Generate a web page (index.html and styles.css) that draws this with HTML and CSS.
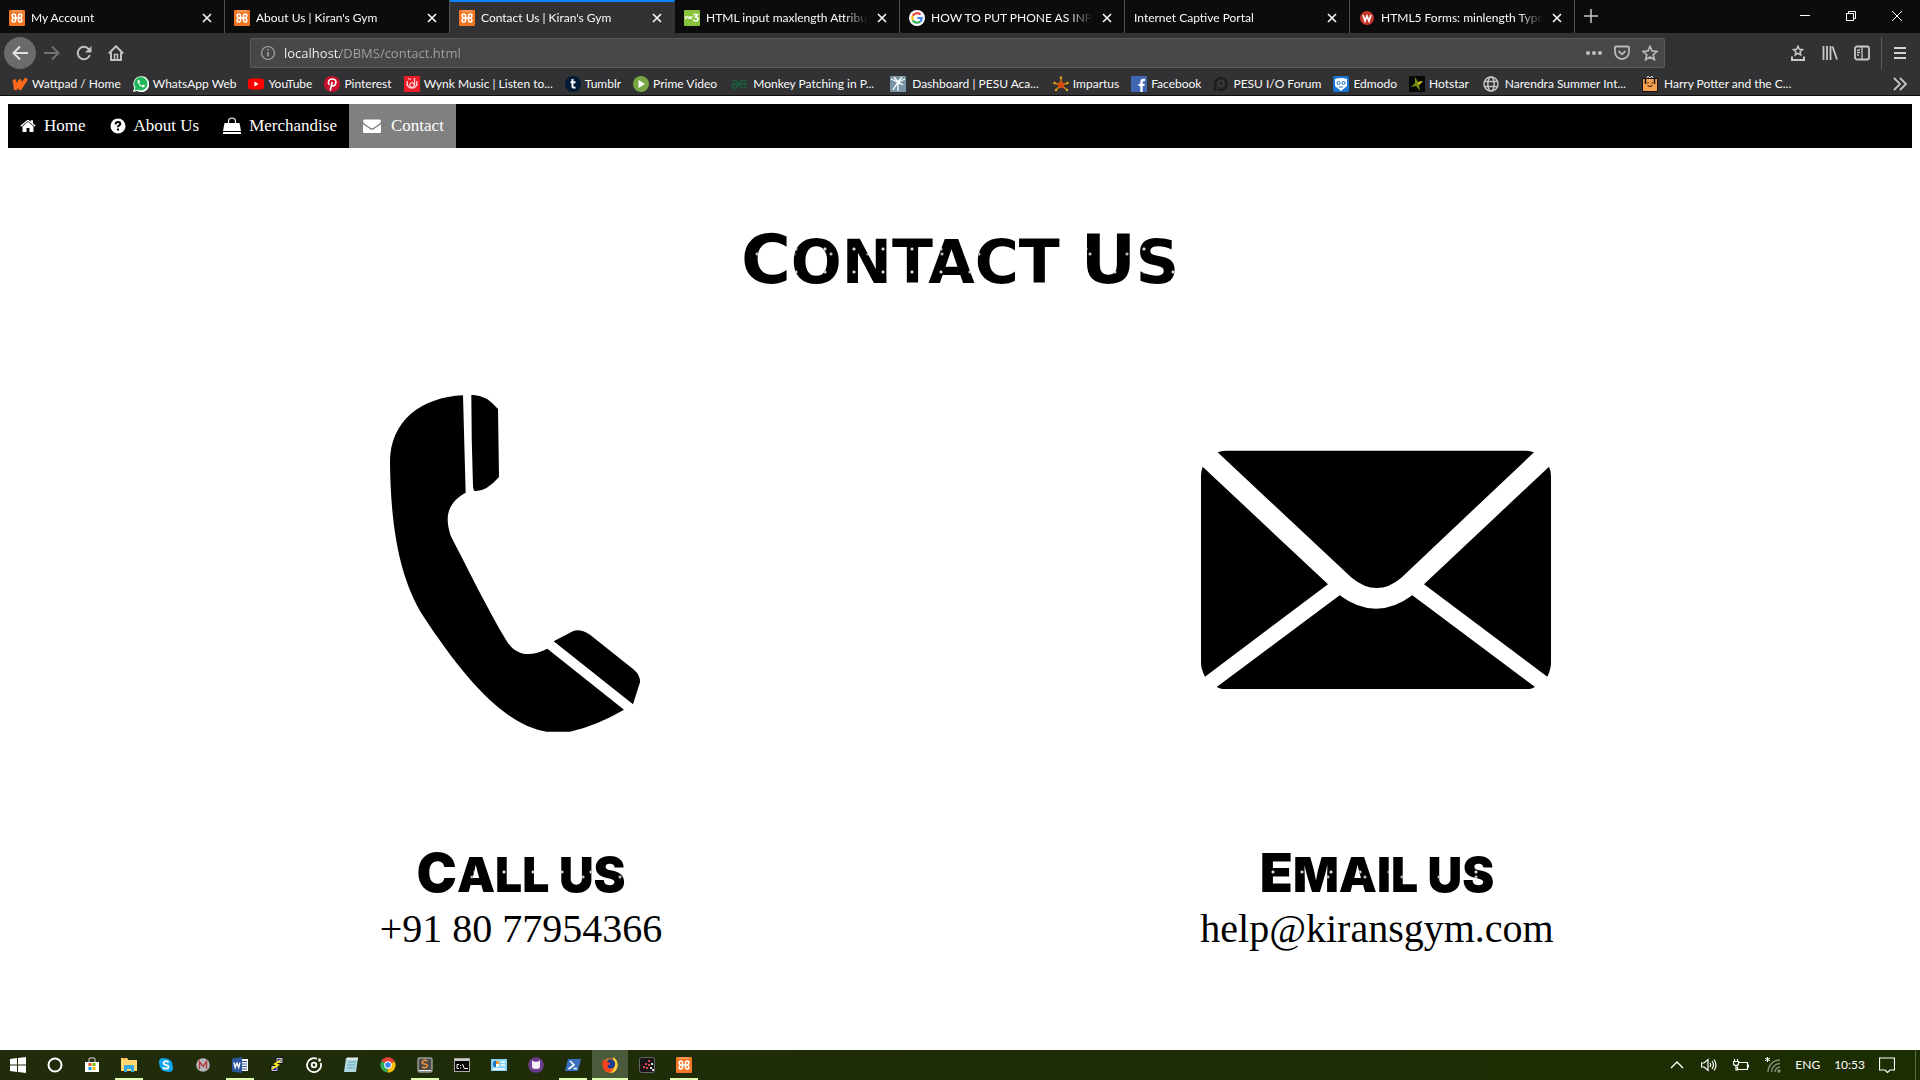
FILE: index.html
```html
<!DOCTYPE html>
<html lang="en">
<head>
<meta charset="utf-8">
<meta name="viewport" content="width=device-width, initial-scale=1">
<title>Contact Us | Kiran's Gym</title>
<link rel="stylesheet" href="styles.css">
</head>
<body>
<svg class="sprite" aria-hidden="true">
  <symbol id="xampp" viewBox="0 0 16 16"><rect width="16" height="16" rx="1" fill="#f37623"/><path d="M3 1h10" stroke="#f9b68a"/><path d="M6.500 7.500V6q0-2-1.700-2T3.100 5.700 5 8h6q1.900-.6 1.900-2.300T11.200 4 9.500 6v4q0 2 1.700 2t1.700-1.700T11 8M5 8q-1.900.6-1.900 2.300T4.800 12t1.700-2V8" fill="none" stroke="#fff" stroke-width="1.600"/></symbol>
  <symbol id="x" viewBox="0 0 16 16"><path d="M4 4l8 8M12 4l-8 8" stroke="#f4f4f4" stroke-width="1.700" fill="none"/></symbol>
</svg>

<header class="browser">
  <div class="tabs">
    <div class="tab"><svg class="ico"><use href="#xampp"/></svg><span class="tab-title">My Account</span><button class="close" aria-label="Close tab"><svg class="ico"><use href="#x"/></svg></button></div>
    <div class="tab"><svg class="ico"><use href="#xampp"/></svg><span class="tab-title">About Us | Kiran's Gym</span><button class="close" aria-label="Close tab"><svg class="ico"><use href="#x"/></svg></button></div>
    <div class="tab tab-active"><svg class="ico"><use href="#xampp"/></svg><span class="tab-title">Contact Us | Kiran's Gym</span><button class="close" aria-label="Close tab"><svg class="ico"><use href="#x"/></svg></button></div>
    <div class="tab"><svg class="ico" viewBox="0 0 16 16"><rect width="16" height="16" rx="1" fill="#8ac43f"/><path d="M1 6l1 3 1.500-3L5 9l1-3M6 6l1 3 1.500-3" fill="none" stroke="#fff"/><path d="M9.500 4.500h4l-2 2.500q2.500 0 2.500 2t-2.200 2q-1.800 0-2.500-1.500" fill="none" stroke="#fff" stroke-width="1.500"/></svg><span class="tab-title">HTML input maxlength Attribut</span><button class="close" aria-label="Close tab"><svg class="ico"><use href="#x"/></svg></button></div>
    <div class="tab"><svg class="ico" viewBox="0 0 16 16"><circle cx="8" cy="8" r="8" fill="#fff"/><g fill="none" stroke-width="2.200"><path d="M11.500 4.600A4.800 4.800 0 0 0 3.800 5.800" stroke="#ea4335"/><path d="M3.800 5.800a4.800 4.800 0 0 0 0 4.500" stroke="#fbbc05"/><path d="M3.800 10.300a4.800 4.800 0 0 0 7.300 1.300" stroke="#34a853"/><path d="M11.100 11.600Q12.700 10.300 12.700 8H8.300" stroke="#4285f4"/></g></svg><span class="tab-title">HOW TO PUT PHONE AS INPUT</span><button class="close" aria-label="Close tab"><svg class="ico"><use href="#x"/></svg></button></div>
    <div class="tab"><span class="tab-title">Internet Captive Portal</span><button class="close" aria-label="Close tab"><svg class="ico"><use href="#x"/></svg></button></div>
    <div class="tab"><svg class="ico" viewBox="0 0 16 16"><circle cx="8" cy="8" r="7" fill="#c8362b"/><path d="M4 5l2 6 2-5 2 5 2-6" fill="none" stroke="#fff" stroke-width="1.700"/></svg><span class="tab-title">HTML5 Forms: minlength Type</span><button class="close" aria-label="Close tab"><svg class="ico"><use href="#x"/></svg></button></div>
    <button class="tool" aria-label="New tab"><svg class="ico" viewBox="0 0 16 16"><path d="M8 1v14M1 8h14" stroke="#c8c8c9" stroke-width="1.500"/></svg></button>
    <div class="window-controls">
      <button aria-label="Minimize"><svg class="ico" viewBox="0 0 16 16"><path d="M3 7.500h10" stroke="#fff"/></svg></button>
      <button aria-label="Restore"><svg class="ico" viewBox="0 0 16 16"><path d="M3.500 5.500h7v7h-7zM5.500 5.500v-2h7v7h-2" fill="none" stroke="#fff"/></svg></button>
      <button aria-label="Close"><svg class="ico" viewBox="0 0 16 16"><path d="M3 3l10 10M13 3L3 13" stroke="#fff"/></svg></button>
    </div>
  </div>

  <div class="toolbar">
    <div class="toolbar-left">
      <button class="tool back" aria-label="Back"><svg class="ico" viewBox="0 0 16 16"><path d="M16 8H1.500M8 1.500L1.500 8 8 14.500" fill="none" stroke="#e2e2e3" stroke-width="2"/></svg></button>
      <button class="tool" aria-label="Forward"><svg class="ico" viewBox="0 0 16 16"><path d="M0 8h14.500M8 1.500L14.500 8 8 14.500" fill="none" stroke="#737375" stroke-width="2"/></svg></button>
      <button class="tool" aria-label="Reload"><svg class="ico" viewBox="0 0 16 16"><path d="M13 4.500A6.200 6.200 0 1 0 13.800 10" fill="none" stroke="#c2c2c4" stroke-width="2"/><path d="M15.500 1v6.500H9z" fill="#c2c2c4"/></svg></button>
      <button class="tool" aria-label="Home"><svg class="ico" viewBox="0 0 16 16"><path d="M.8 8.500L8 1.200l7.200 7.300M3 7.500V15h10V7.500" fill="none" stroke="#c2c2c4" stroke-width="2"/><path d="M6.500 15V9.500h3V15" fill="none" stroke="#c2c2c4" stroke-width="1.500"/></svg></button>
    </div>
    <div class="urlbar">
      <svg class="ico" viewBox="0 0 16 16"><circle cx="8" cy="8" r="6.500" fill="none" stroke="#a9a9ab" stroke-width="1.200"/><path d="M8 7v4.500M8 4v1.600" stroke="#a9a9ab" stroke-width="1.500"/></svg>
      <input class="url" type="text" aria-label="Address" value="localhost/DBMS/contact.html">
      <button class="url-btn" aria-label="Page actions"><svg class="ico" viewBox="0 0 16 16" fill="#c0c0c2"><circle cx="2" cy="8" r="2"/><circle cx="8" cy="8" r="2"/><circle cx="14" cy="8" r="2"/></svg></button>
      <button class="url-btn" aria-label="Save to Pocket"><svg class="ico" viewBox="0 0 16 16" fill="none" stroke="#b8b8ba" stroke-width="1.800"><path d="M2 1.500h12q1 0 1 1V7a7 7 0 0 1-14 0V2.500q0-1 1-1z"/><path d="M4.500 6L8 9.300 11.500 6"/></svg></button>
      <button class="url-btn" aria-label="Bookmark this page"><svg class="ico" viewBox="0 0 16 16"><path d="M8 1.300l2 4.600 5 .5-3.800 3.300 1.200 5L8 12.100l-4.400 2.600 1.200-5L1 6.400l5-.5z" fill="none" stroke="#b8b8ba" stroke-width="1.700"/></svg></button>
    </div>
    <div class="toolbar-right">
      <button class="tool" aria-label="Bookmarks"><svg class="ico" viewBox="0 0 16 16" fill="none" stroke="#c8c8ca"><path d="M8 1.200l1.300 3 3.200.3-2.400 2.200.7 3.300L8 8.300 5.200 10l.7-3.300-2.400-2.200 3.200-.3z" stroke-width="1.500"/><path d="M2 11.500V15h12v-3.500" stroke-width="2"/></svg></button>
      <button class="tool" aria-label="Library"><svg class="ico" viewBox="0 0 16 16"><path d="M1.500 1v14M5 1v14M8.500 1v14M10.500 1.500l4.500 13" stroke="#c8c8ca" stroke-width="1.800"/></svg></button>
      <button class="tool" aria-label="Sidebar"><svg class="ico" viewBox="0 0 16 16" fill="none" stroke="#c8c8ca"><rect x="1" y="1.500" width="14" height="13" rx="2" stroke-width="1.800"/><path d="M8 2v12M3 5h3M3 7.500h3M3 10h2" stroke-width="1.300"/></svg></button>
      <button class="tool menu" aria-label="Menu"><svg class="ico" viewBox="0 0 16 16"><path d="M2 3h12M2 8h12M2 13h12" stroke="#d4d4d5" stroke-width="2"/></svg></button>
    </div>
  </div>

  <nav class="bookmarks" aria-label="Bookmarks">
    <a href="#"><svg class="ico" viewBox="0 0 16 16"><path d="M1.500 4q2 2 2 8.500L8 5v7.500L14.500 2.500" fill="none" stroke="#ff6a1a" stroke-width="3.600" stroke-linejoin="round"/></svg>Wattpad / Home</a>
    <a href="#"><svg class="ico" viewBox="0 0 16 16"><path d="M0 16l1.200-4.200A8 8 0 1 1 4.200 15z" fill="#fff"/><path d="M1.500 14.500l.8-3A6.700 6.700 0 1 1 5 13.800z" fill="#20b858"/><path d="M5 4q-1 1 0 3 1.500 3.500 5 4.500 1.500 0 2-2L10 8.500 9 9.700Q7 9 6.200 7L7 6 6 4z" fill="#fff"/></svg>WhatsApp Web</a>
    <a href="#"><svg class="ico" viewBox="0 0 16 16"><rect y="2.500" width="16" height="11" rx="3" fill="#f00"/><path d="M6.400 5.500L10.500 8l-4.100 2.500z" fill="#fff"/></svg>YouTube</a>
    <a href="#"><svg class="ico" viewBox="0 0 16 16"><circle cx="8" cy="8" r="8" fill="#c8102e"/><path d="M6.200 14.500L8.200 6M5.300 8.800C3 5.500 5.500 3 8.300 3s4.200 2 3.500 4.300c-.7 2.800-3 3.300-4.300 1.700" fill="none" stroke="#fff" stroke-width="1.600"/></svg>Pinterest</a>
    <a href="#"><svg class="ico" viewBox="0 0 16 16"><rect width="16" height="16" fill="#ee1c2a"/><path d="M3.500 5a5 5 0 1 0 9 0M10.500 2v7.500M4 2.500l3 1" fill="none" stroke="#ffd5d5" stroke-width="1.300"/><circle cx="8" cy="9" r="2.300" fill="none" stroke="#fff"/></svg>Wynk Music | Listen to...</a>
    <a href="#"><svg class="ico" viewBox="0 0 16 16"><circle cx="8" cy="8" r="8" fill="#001935"/><path d="M7.500 3v7.500q0 1.500 3 1M5.500 6.200h5" fill="none" stroke="#fff" stroke-width="2"/></svg>Tumblr</a>
    <a href="#"><svg class="ico" viewBox="0 0 16 16"><circle cx="8" cy="8" r="8" fill="#78a642"/><path d="M5.500 4l6.500 4-6.500 4z" fill="#fff"/></svg>Prime Video</a>
    <a href="#" class="wide"><svg class="ico" viewBox="0 0 16 16"><path d="M1 5q6-2 6 3t-5 4q-1-1-1-4h14q0 3-1 4-5 1-5-4t6-3" fill="none" stroke="#17643c" stroke-width="1.300"/></svg>Monkey Patching in P...</a>
    <a href="#" class="wide"><svg class="ico" viewBox="0 0 16 16"><rect width="16" height="16" rx="1" fill="#7895a5"/><path d="M1 3l7 3 7-3M4 1l4 5 4-5M8 6v9M3 14L8 6l5 3" fill="none" stroke="#fff" stroke-width="1.300"/></svg>Dashboard | PESU Aca...</a>
    <a href="#"><svg class="ico" viewBox="0 0 16 16"><path d="M8 9V1M8 9L1 7M8 9l7-2M8 9l-5 5M8 9l6 5" stroke="#c98b12" stroke-width="1.500"/><circle cx="8" cy="9" r="3.200" fill="#d9480f"/><g fill="#e6a817"><circle cx="8" cy="1.500" r="1.200"/><circle cx="1.500" cy="7" r="1.200"/><circle cx="14.500" cy="7" r="1.200"/><circle cx="3" cy="14" r="1.200"/><circle cx="14" cy="14" r="1.200"/></g></svg>Impartus</a>
    <a href="#"><svg class="ico" viewBox="0 0 16 16"><rect width="16" height="16" fill="#4267b2"/><path d="M10.500 16V6q0-2 2-2H14M7.500 8.800h6" fill="none" stroke="#fff" stroke-width="2.300"/></svg>Facebook</a>
    <a href="#"><svg class="ico" viewBox="0 0 16 16"><path d="M2 15V7a6 6 0 1 1 6 7H5" fill="#29292b" stroke="#1d1d1e" stroke-width="2"/><circle cx="8" cy="7.500" r="3" fill="none" stroke="#49494b"/></svg>PESU I/O Forum</a>
    <a href="#"><svg class="ico" viewBox="0 0 16 16"><rect width="16" height="16" rx="2" fill="#1976d2"/><path d="M2 3q6-2 12 0v7l-6 5-6-5z" fill="#fff"/><circle cx="5.500" cy="7" r="1.600" fill="none" stroke="#1976d2"/><circle cx="10.500" cy="7" r="1.600" fill="none" stroke="#1976d2"/><path d="M6 11h4" stroke="#1976d2"/></svg>Edmodo</a>
    <a href="#"><svg class="ico" viewBox="0 0 16 16"><rect width="16" height="16" fill="#050805"/><path d="M6 1l3 5 5-1-4 4 1 6-4-5-5 1 4-4z" fill="#728f16"/><path d="M9 6l5-1-4 4z" fill="#e4c41b"/></svg>Hotstar</a>
    <a href="#" class="wide"><svg class="ico" viewBox="0 0 16 16" fill="none" stroke="#c4c4c6" stroke-width="1.500"><circle cx="8" cy="8" r="7"/><ellipse cx="8" cy="8" rx="3.200" ry="7"/><path d="M1.500 5.500h13M1.500 10.500h13"/></svg>Narendra Summer Int...</a>
    <a href="#" class="wide"><svg class="ico" viewBox="0 0 16 16"><path d="M5 2l1-2 2 2 2-2 1 2" fill="none" stroke="#ddd"/><rect x=".5" y="2.500" width="15" height="13" fill="#f7a04f" stroke="#17120e"/><path d="M3.500 3v5M12.500 3v5" stroke="#17120e" stroke-width="1.500"/><path d="M6 6v1.500M10 6v1.500M5.500 9.500q2.500 2 5 0" fill="none" stroke="#17120e"/></svg>Harry Potter and the C...</a>
    <button class="overflow" aria-label="More bookmarks"><svg class="ico" viewBox="0 0 16 16"><path d="M2 2l6 6-6 6M8 2l6 6-6 6" fill="none" stroke="#c4c4c6" stroke-width="1.800"/></svg></button>
  </nav>
</header>

<main class="page">
  <nav class="site-nav" aria-label="Main">
    <a href="#"><svg class="nav-ico" viewBox="0 0 16 16" fill="#fff"><path d="M8 3.800L2.500 8.500v5q0 .5.5.5h3.500v-4h3v4H13q.5 0 .5-.5v-5z"/><path d="M13 5.500V2.200h-2.200v1.400L9 2.200Q8 1.400 7 2.200L.3 7.800l.9 1L8 3l6.800 5.800.9-1z"/></svg>Home</a>
    <a href="#"><svg class="nav-ico" viewBox="0 0 16 16"><circle cx="8" cy="8" r="7.500" fill="#fff"/><path d="M5.500 6.300Q5.800 4 8 4t2.300 1.800Q10.300 7 9 7.700T8 9.300" fill="none" stroke="#000" stroke-width="2"/><path d="M7 10.500h2v2H7z"/></svg>About Us</a>
    <a href="#"><svg class="nav-ico nav-ico-wide" viewBox="0 0 18 18"><path d="M1.500 6h15L18 14H0zM0 15h18v2H0z" fill="#fff"/><path d="M5.500 8V4.500Q5.500 1 9 1t3.500 3.500V8" fill="none" stroke="#fff" stroke-width="1.200"/></svg>Merchandise</a>
    <a href="#" class="current" aria-current="page"><svg class="nav-ico nav-ico-wide" viewBox="0 0 18 18" fill="#fff"><path d="M0 4q0-1.500 1.500-1.500h15Q18 2.500 18 4q0 1.500-2 3l-5 3.500q-2 1.500-4 0L2 7Q0 5.500 0 4z"/><path d="M0 7q1 1 6.500 4.800 2.500 1.700 5 0Q17 8 18 7v7.500q0 1.500-1.500 1.500h-15Q0 16 0 14.500z"/></svg>Contact</a>
  </nav>

  <h1 class="title"><span class="cap">C</span>ontact <span class="cap">U</span>s</h1>

  <div class="contacts">
    <section class="contact">
      <div class="picture"><svg class="phone" viewBox="60 60 846 1080" role="img" aria-label="Phone"><path d="M309 79C185 85 90 155 90 280C92 480 120 630 190 742C320 940 440 1070 560 1088H630Q710 1070 792 1022L562 839C510 866 467 860 440 816C380 716 325 602 272 500C252 440 265 400 317 371zM334 78Q375 74 414 120L417 324Q380 367 345 367Q340 364 339 350Q334 210 334 78zM581 817L640 786Q660 778 690 797L822 902Q841 919 840 940L819 1006z"/></svg></div>
      <h2 class="subtitle"><span class="cap">C</span>all us</h2>
      <p class="detail">+91 80 77954366</p>
    </section>
    <section class="contact">
      <div class="picture"><svg class="envelope" viewBox="60 60 1056 720" role="img" aria-label="Envelope"><path d="M110 70Q120 65 135 65H1035Q1048 65 1059 70L661 446Q588 508 512 446zM65 113L441 466L72 743Q60 722 60 700V140Q60 126 65 113zM1104 113Q1110 126 1110 140V700Q1110 722 1099 743L729 466zM476 499Q585 580 694 499L1062 774Q1050 781 1035 781H135Q120 781 107 774z"/></svg></div>
      <h2 class="subtitle"><span class="cap">E</span>mail us</h2>
      <p class="detail">help@kiransgym.com</p>
    </section>
  </div>
</main>

<footer class="taskbar">
  <button aria-label="Start"><svg class="ico" viewBox="0 0 16 16" fill="#fff"><path d="M0 2l7-1v6.500H0zM8 1l8-1v7.500H8zM0 8.500h7V15l-7-1zM8 8.500h8V16l-8-1z"/></svg></button>
  <button aria-label="Search"><svg class="ico" viewBox="0 0 16 16"><circle cx="8" cy="8" r="6.500" fill="none" stroke="#fff" stroke-width="2"/></svg></button>
  <button aria-label="Store"><svg class="ico" viewBox="0 0 16 16"><path d="M1 5h14v10H1z" fill="#fff"/><path d="M5 5V2q0-1 1-1h4q1 0 1 1v3" fill="none" stroke="#ddd"/><path d="M4.500 6h3v3h-3z" fill="#f25022"/><path d="M8.500 6h3v3h-3z" fill="#7fba00"/><path d="M4.500 10h3v3h-3z" fill="#00a4ef"/><path d="M8.500 10h3v3h-3z" fill="#ffb900"/></svg></button>
  <button class="open" aria-label="File Explorer"><svg class="ico" viewBox="0 0 16 16"><path d="M0 1h6l1.500 2H16v11H0z" fill="#ffd871"/><path d="M2 2h3" stroke="#e39a15"/><path d="M3 15V9q0-1 1-1h8q1 0 1 1v6h-3v-3H6v3z" fill="#35a7e2"/></svg></button>
  <button aria-label="Skype"><svg class="ico" viewBox="0 0 16 16" fill="#12a5ec"><circle cx="8" cy="8" r="6.500"/><circle cx="5" cy="5" r="4"/><circle cx="11" cy="11" r="4"/><path d="M10.700 5.500Q9.500 4.200 8 4.200T5.500 6q0 1.500 2.500 2t2.500 2q0 1.700-2.500 1.700T5.200 10.300" fill="none" stroke="#fff" stroke-width="1.800"/></svg></button>
  <button aria-label="Mail client"><svg class="ico" viewBox="0 0 16 16"><circle cx="8" cy="8" r="6.800" fill="#b4b7bd"/><path d="M4.500 12V4.500L8 9.500l3.500-5V12" fill="none" stroke="#b83b3b" stroke-width="1.400"/></svg></button>
  <button class="open" aria-label="Word"><svg class="ico" viewBox="0 0 16 16"><path d="M9 2h7v12H9z" fill="#fff"/><path d="M10 4.500h5M10 7h5M10 9.500h5M10 12h5" stroke="#2b579a"/><path d="M0 1.500L10 0v16L0 14.500z" fill="#2b579a"/><path d="M2 5.500l1.200 5L5 6l1.700 4.500L8 5.500" fill="none" stroke="#fff" stroke-width="1.300"/></svg></button>
  <button aria-label="PuTTY"><svg class="ico" viewBox="0 0 16 16"><path d="M7 .5h7v6H7zM2 8.500h7v6H2z" fill="#c9c9c9" stroke="#111"/><path d="M8.500 2h4v3h-4zM3.500 10h4v3h-4z" fill="#1a1aa8"/><path d="M12 3L6 7l3 1-6 4" fill="none" stroke="#ffeb1f" stroke-width="1.800"/></svg></button>
  <button aria-label="Groove"><svg class="ico" viewBox="0 0 16 16" fill="none" stroke="#fff" stroke-width="1.800"><path d="M11 1.800A7 7 0 1 0 14.700 6"/><circle cx="8" cy="8" r="2.300"/><path d="M13.500 1.500v3" stroke-width="2.500"/></svg></button>
  <button aria-label="Notepad"><svg class="ico" viewBox="0 0 16 16"><path d="M3 1h12l-2 14H1z" fill="#aed9e2"/><path d="M4 1.500h11" stroke="#eee" stroke-width="2"/><path d="M5 5h8M4.500 8h8M4 11h8" stroke="#6daab9"/></svg></button>
  <button aria-label="Chrome"><svg class="ico" viewBox="0 0 16 16"><path d="M8 8L1.500 4A7.500 7.500 0 0 1 14.700 4.500z" fill="#ea4335"/><path d="M8 8L1.500 4A7.500 7.500 0 0 0 7.500 15.500z" fill="#34a853"/><path d="M8 8l6.700-3.500A7.500 7.500 0 0 1 7.500 15.500z" fill="#fbbc05"/><circle cx="8" cy="8" r="3.800" fill="#fff"/><circle cx="8" cy="8" r="2.800" fill="#4285f4"/></svg></button>
  <button class="open" aria-label="Sublime Text"><svg class="ico" viewBox="0 0 16 16"><rect x="1" y="1" width="14" height="14" rx="1" fill="#4a4a4a" stroke="#ccc"/><path d="M2 13.500h12" stroke="#eee"/><path d="M10.500 4.200Q8 2.500 6 4t.5 2.700l3 .8q1.500 1 0 2.500t-4.200 0" fill="none" stroke="#f79232" stroke-width="1.500"/></svg></button>
  <button aria-label="Command Prompt"><svg class="ico" viewBox="0 0 16 16"><rect x=".5" y="1.500" width="15" height="13" fill="#050505" stroke="#a9a9a9"/><path d="M1 3h14" stroke="#ccc" stroke-width="2"/><path d="M5 7.500H3v4h2M6.500 8v1M6.500 10.500v1M8.500 7l2 5M11 11.500h3" fill="none" stroke="#fff"/></svg></button>
  <button aria-label="Control Panel"><svg class="ico" viewBox="0 0 16 16"><rect y="2" width="16" height="12" fill="#8ad4f5"/><circle cx="5" cy="7" r="3.200" fill="#fff"/><path d="M5 7V3.800A3.200 3.200 0 0 1 8.200 7z" fill="#f7941d"/><path d="M5 7V3.800A3.200 3.200 0 0 0 5 10.200z" fill="#1975bb"/><path d="M10 5h4M10 8h4M2 12h12" stroke="#fff" stroke-width="1.500"/></svg></button>
  <button aria-label="GitHub"><svg class="ico" viewBox="0 0 16 16"><circle cx="8" cy="8" r="7.800" fill="#6e3d91"/><path d="M4 3.500l2.500 1.200h3L12 3.500v6q0 2.500-4 2.500T4 9.500z" fill="#f4f0f7"/></svg></button>
  <button class="open" aria-label="PowerShell"><svg class="ico" viewBox="0 0 16 16"><path d="M3 2h13l-3 12H0z" fill="#3b6fc0"/><path d="M5 4l4 4-5.500 4M8.500 11.500h3.500" fill="none" stroke="#fff" stroke-width="1.600"/></svg></button>
  <button class="open active" aria-label="Firefox"><svg class="ico" viewBox="0 0 16 16"><circle cx="8" cy="8.500" r="7.300" fill="#ff7a18"/><path d="M11 0q5 3 4.700 8.500A7.500 7.500 0 0 1 8 16q5-3 4-8z" fill="#ffd43b"/><circle cx="8.500" cy="7" r="4.700" fill="#183d91"/><path d="M1 3q-2 8 3 11t8-2q-3 2-5 0t-1-4l3-1-3-2z" fill="#f6401f"/></svg></button>
  <button aria-label="Puzzle app"><svg class="ico" viewBox="0 0 16 16"><rect x=".5" y=".5" width="15" height="15" rx="2" fill="#191416" stroke="#676767"/><path d="M9 3h2v2H9zM6 6h2v2H6zM9 7h2v2H9zM4 9h2v2H4zM7 10h2v2H7z" fill="#e0464f"/><path d="M12 6h2v2h-2zM11 10h2v2h-2zM13 12h2v2h-2z" fill="#ddd"/></svg></button>
  <button class="open" aria-label="XAMPP"><svg class="ico"><use href="#xampp"/></svg></button>
  <div class="tray">
    <div class="status">
      <svg class="ico" viewBox="0 0 16 16"><path d="M2 11l6-6 6 6" fill="none" stroke="#fff" stroke-width="1.400"/></svg>
      <svg class="ico" viewBox="0 0 16 16" fill="none" stroke="#fff"><path d="M.5 6h2.500L7 2.500v11L3 10H.5zM9 6q1.500 2 0 4M11 4q3 4 0 8M13 2.500q4 5.500 0 11" stroke-width="1.200"/></svg>
      <svg class="ico" viewBox="0 0 16 16" fill="none" stroke="#fff"><path d="M6 5.500h8.500v7H4.500v-3M15.500 7.500v3M1.500 2v2M4.500 2v2M.5 4.500h5v2q0 2-2.500 2t-2.500-2zM3 9v4h2" stroke-width="1.200"/></svg>
      <svg class="ico" viewBox="0 0 16 16" fill="none" stroke="#87907a" stroke-width="1.400"><path d="M3 15A12 12 0 0 1 15 3M6.500 15A8.500 8.500 0 0 1 15 6.500M10 15a5 5 0 0 1 5-5"/><circle cx="14" cy="14" r="1"/><path d="M2.500 0v5M0 1.200l5 2.600M5 1.200L0 3.800" stroke="#fff" stroke-width="1"/></svg>
    </div>
    <span>ENG</span>
    <time>10:53</time>
    <svg class="ico" viewBox="0 0 16 16"><path d="M.5 1h15v12H11l-2.500 2.500L6 13H.5z" fill="none" stroke="#fff" stroke-width="1.200"/></svg>
  </div>
</footer>
</body>
</html>
```

FILE: styles.css
```css
* { box-sizing: border-box; }

body {
  margin: 0;
  min-height: 100vh;
  display: flex;
  flex-direction: column;
  background: #fff;
  color: #000;
  font-family: "Liberation Serif", "Times New Roman", serif;
}

button {
  border: 0;
  padding: 0;
  background: none;
  display: flex;
  align-items: center;
  justify-content: center;
}

a { color: inherit; text-decoration: none; }

.sprite { display: none; }
.ico { width: 16px; height: 16px; flex: none; display: block; }

/* Browser chrome */
.browser {
  background: #323234;
  color: #f9f9fa;
  font: 12px/16px Lato, "Noto Sans", sans-serif;
  border-bottom: 1px solid #0c0c0d;
}

.tabs { display: flex; height: 33px; background: #0c0c0d; }

.tab {
  flex: 0 1 225px;
  min-width: 0;
  display: flex;
  align-items: center;
  gap: 6px;
  padding: 2px 9px 0;
  border-right: 1px solid #505052;
}

.tab-active {
  background: #323234;
  border-top: 2px solid #0a84ff;
  border-right-color: #323234;
  padding-top: 0;
}

.tab-title {
  flex: 1;
  overflow: hidden;
  white-space: nowrap;
  mask-image: linear-gradient(to left, transparent, #000 24px);
}

.tool { width: 32px; height: 32px; }

.window-controls { display: flex; margin-left: auto; }
.window-controls button { width: 46px; height: 32px; }

.toolbar { display: flex; align-items: center; height: 40px; }
.toolbar-left { display: flex; flex: 0 0 250px; padding-left: 4px; }
.back { border-radius: 50%; background: #6b6b6d; }

.urlbar {
  flex: 1;
  display: flex;
  align-items: center;
  height: 30px;
  padding-left: 9px;
  background: #474749;
  border: 1px solid #5a5a5c;
  border-radius: 2px;
}

.url {
  flex: 1;
  min-width: 0;
  border: 0;
  padding: 0;
  margin: 0 8px;
  font: 13px/20px "Open Sans", "Noto Sans", sans-serif;
  color: transparent;
  background: linear-gradient(to right, #f9f9fa 56px, #a2a2a4 56px);
  background-clip: text;
}

.url-btn { width: 28px; height: 28px; }

.toolbar-right {
  flex: 0 0 255px;
  display: flex;
  align-items: center;
  justify-content: flex-end;
  padding-right: 3px;
}

.menu { width: 36px; margin-left: 3px; border-left: 1px solid #5c5c5e; }

.bookmarks {
  display: flex;
  align-items: center;
  gap: 12px;
  height: 22px;
  padding: 0 12px;
  white-space: nowrap;
}

.bookmarks a { display: flex; gap: 4px; }
.bookmarks .wide { gap: 6px; padding: 0 2px; }
.overflow { margin-left: auto; }

/* Web page */
.page { flex: 1; padding: 8px; }

.site-nav {
  display: flex;
  background: #000;
  color: #fff;
  font-size: 17px;
  line-height: 20px;
}

.site-nav a {
  display: flex;
  align-items: center;
  gap: 8px;
  padding: 12px;
}

.site-nav .current { background: #808080; gap: 10px; padding-left: 14px; }
.nav-ico { width: 16px; height: 16px; }
.nav-ico-wide { width: 18px; height: 18px; }

/* Headings are black letters with a worn, speckled print */
.title,
.subtitle {
  color: transparent;
  background:
    radial-gradient(circle at 5px 6px, #ddd 0 1px, transparent 2px) 0 0 / 29px 23px,
    radial-gradient(circle at 9px 3px, #bbb 0 1px, transparent 2px) 0 0 / 37px 31px,
    #000;
  background-clip: text;
  text-align: center;
  text-transform: uppercase;
}

.title {
  margin: 72px 0 87px;
  font-family: "DejaVu Sans", sans-serif;
  font-weight: 700;
  font-size: 60px;
  line-height: 80px;
}
.title .cap { font-size: 68px; }

.contacts {
  display: grid;
  grid-template-columns: 1fr 1fr;
  padding: 0 107px 0 85px;
  text-align: center;
}

.picture {
  display: flex;
  align-items: center;
  justify-content: center;
  height: 360px;
}

.phone { width: 282px; height: 360px; }
.envelope { width: 352px; height: 240px; }

.subtitle {
  margin: 94px 0 0;
  font-family: Inter, sans-serif;
  font-size: 48px;
  line-height: 60px;
  font-weight: 900;
}
.subtitle .cap { font-size: 54px; }

.detail { margin: 1px 0 0; font-size: 40px; line-height: 46px; }

/* Taskbar */
.taskbar {
  display: flex;
  gap: 1px;
  height: 30px;
  padding-right: 4px;
  background: linear-gradient(to right, #202c0b, #1d2d02);
  color: #fff;
  font: 12px/16px Lato, "Noto Sans", sans-serif;
}

.taskbar button { width: 36px; height: 30px; }

.open {
  background: linear-gradient(#e1ffb2, #e1ffb2) bottom / 28px 2px no-repeat;
}

.taskbar .active {
  background-color: #4c5a3c;
  background-size: 36px 2px;
}

.tray {
  display: flex;
  align-items: center;
  gap: 14px;
  margin-left: auto;
  padding-right: 20px;
  border-right: 1px solid #5c674b;
}

.status { display: flex; gap: 16px; }
```
